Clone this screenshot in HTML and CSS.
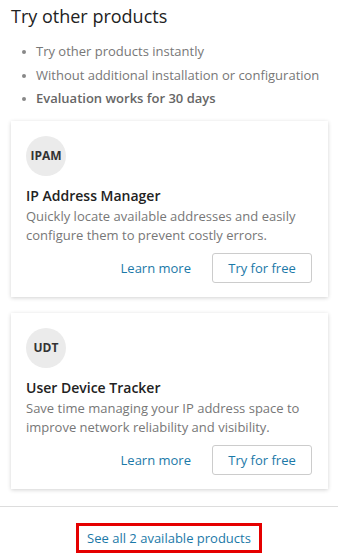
FILE: index.html
```html
<!DOCTYPE html>
<html lang="en">
<head>
    <meta charset="UTF-8">
    <meta name="viewport" content="width=device-width, initial-scale=1.0">
    <title>Try other products</title>
    <link rel="stylesheet" href="styles.css">
</head>
<body>

<div class="products-panel">
    <h2 class="panel-title">Try other products</h2>

    <ul class="perks">
        <li>Try other products instantly</li>
        <li>Without additional installation or configuration</li>
        <li class="strong">Evaluation works for 30 days</li>
    </ul>

    <div class="product-card">
        <div class="product-badge">IPAM</div>
        <h3 class="product-name">IP Address Manager</h3>
        <p class="product-desc">Quickly locate available addresses and easily configure them to prevent costly errors.</p>
        <div class="product-actions">
            <a href="#" class="learn-link">Learn more</a>
            <button type="button" class="try-btn">Try for free</button>
        </div>
    </div>

    <div class="product-card">
        <div class="product-badge">UDT</div>
        <h3 class="product-name">User Device Tracker</h3>
        <p class="product-desc">Save time managing your IP address space to improve network reliability and visibility.</p>
        <div class="product-actions">
            <a href="#" class="learn-link">Learn more</a>
            <button type="button" class="try-btn">Try for free</button>
        </div>
    </div>
</div>

<div class="panel-footer">
    <a href="#" class="see-all">See all 2 available products</a>
</div>

</body>
</html>
```

FILE: styles.css
```css
body {
    font-family: "Open Sans", Arial, sans-serif;
    background-color: #fff;
    margin: 0;
    padding: 0;
    color: #333;
}

.products-panel {
    padding: 4px 10px 17px 11px;
}

.panel-title {
    font-size: 18px;
    font-weight: 400;
    color: #222;
    margin: 0 0 12px 0;
    line-height: 24px;
}

.perks {
    list-style: none;
    margin: 0 0 10px 0;
    padding: 0 0 0 11px;
}

.perks li {
    position: relative;
    font-size: 13px;
    line-height: 23.5px;
    color: #777;
    padding-left: 14px;
}

.perks li::before {
    content: "";
    position: absolute;
    left: 0;
    top: 10px;
    width: 4px;
    height: 4px;
    border-radius: 50%;
    background-color: #888;
}

.perks li.strong {
    font-weight: 600;
    color: #666;
}

.product-card {
    background-color: #fff;
    box-shadow: 0 1px 4px rgba(0, 0, 0, 0.18);
    padding: 15px 15px 14px 15px;
    margin-bottom: 16px;
}

.product-card:last-child {
    margin-bottom: 0;
}

.product-badge {
    width: 40px;
    height: 40px;
    border-radius: 50%;
    background-color: #ebebeb;
    display: flex;
    align-items: center;
    justify-content: center;
    font-size: 12px;
    font-weight: 700;
    color: #333;
}

.product-name {
    font-size: 14px;
    font-weight: 600;
    color: #222;
    margin: 10px 0 1px 0;
    line-height: 20px;
}

.product-desc {
    font-size: 13px;
    line-height: 19px;
    color: #777;
    margin: 0 0 8px 0;
}

.product-actions {
    display: flex;
    justify-content: flex-end;
    align-items: center;
    gap: 21px;
    padding-right: 1px;
}

.learn-link {
    color: #1b79a8;
    font-size: 13px;
    text-decoration: none;
}

.try-btn {
    width: 100px;
    height: 30px;
    background-color: #fff;
    border: 1px solid #ccc;
    border-radius: 3px;
    color: #1b79a8;
    font-family: "Open Sans", Arial, sans-serif;
    font-size: 13px;
    cursor: pointer;
}

.panel-footer {
    border-top: 1px solid #ddd;
    display: flex;
    justify-content: center;
    padding-top: 16px;
}

.see-all {
    color: #1b79a8;
    font-size: 13px;
    text-decoration: none;
    border: 3px solid #e50000;
    padding: 2px 8px;
    line-height: 20px;
}
```
